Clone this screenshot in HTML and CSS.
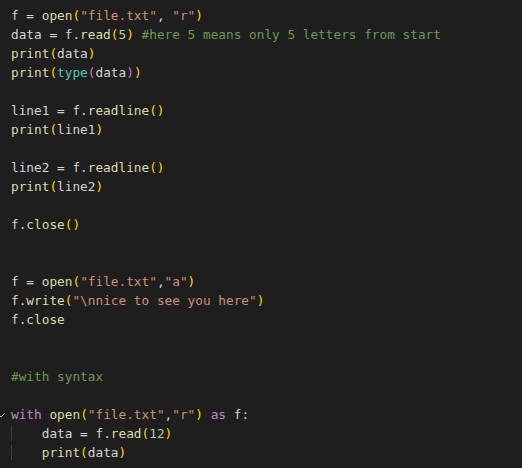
FILE: index.html
```
<!DOCTYPE html>
<html>
<head>
<meta charset="utf-8">
<link rel="stylesheet" href="styles.css">
</head>
<body>
<div class="editor">
<div class="ln"><span class="g"></span><code>f = <span class="fn">open</span><span class="b1">(</span><span class="s">"file.txt"</span>, <span class="s">"r"</span><span class="b1">)</span></code></div>
<div class="ln"><span class="g"></span><code>data = f.<span class="fn">read</span><span class="b1">(</span><span class="n">5</span><span class="b1">)</span> <span class="c">#here 5 means only 5 letters from start</span></code></div>
<div class="ln"><span class="g"></span><code><span class="fn">print</span><span class="b1">(</span>data<span class="b1">)</span></code></div>
<div class="ln"><span class="g"></span><code><span class="fn">print</span><span class="b1">(</span><span class="t">type</span><span class="b2">(</span>data<span class="b2">)</span><span class="b1">)</span></code></div>
<div class="ln"><span class="g"></span><code></code></div>
<div class="ln"><span class="g"></span><code>line1 = f.<span class="fn">readline</span><span class="b1">()</span></code></div>
<div class="ln"><span class="g"></span><code><span class="fn">print</span><span class="b1">(</span>line1<span class="b1">)</span></code></div>
<div class="ln"><span class="g"></span><code></code></div>
<div class="ln"><span class="g"></span><code>line2 = f.<span class="fn">readline</span><span class="b1">()</span></code></div>
<div class="ln"><span class="g"></span><code><span class="fn">print</span><span class="b1">(</span>line2<span class="b1">)</span></code></div>
<div class="ln"><span class="g"></span><code></code></div>
<div class="ln"><span class="g"></span><code>f.<span class="fn">close</span><span class="b1">()</span></code></div>
<div class="ln"><span class="g"></span><code></code></div>
<div class="ln"><span class="g"></span><code></code></div>
<div class="ln"><span class="g"></span><code>f = <span class="fn">open</span><span class="b1">(</span><span class="s">"file.txt"</span>,<span class="s">"a"</span><span class="b1">)</span></code></div>
<div class="ln"><span class="g"></span><code>f.<span class="fn">write</span><span class="b1">(</span><span class="s">"\nnice to see you here"</span><span class="b1">)</span></code></div>
<div class="ln"><span class="g"></span><code>f.<span class="fn">close</span></code></div>
<div class="ln"><span class="g"></span><code></code></div>
<div class="ln"><span class="g"></span><code></code></div>
<div class="ln"><span class="g"></span><code><span class="c">#with syntax</span></code></div>
<div class="ln"><span class="g"></span><code></code></div>
<div class="ln"><span class="g"><svg class="fold" width="8" height="8" viewBox="0 0 8 8"><polyline points="0.5,2.5 4,6 7.5,2.5" fill="none" stroke="#c5c5c5" stroke-width="1"/></svg></span><code><span class="k">with</span> <span class="fn">open</span><span class="b1">(</span><span class="s">"file.txt"</span>,<span class="s">"r"</span><span class="b1">)</span> <span class="k">as</span> f:</code></div>
<div class="ln"><span class="g"></span><code><span class="ind">    </span>data = f.<span class="fn">read</span><span class="b1">(</span><span class="n">12</span><span class="b1">)</span></code></div>
<div class="ln"><span class="g"></span><code><span class="ind">    </span><span class="fn">print</span><span class="b1">(</span>data<span class="b1">)</span></code></div>
</div>
</body>
</html>
```
FILE: styles.css
```
html, body {
  margin: 0;
  padding: 0;
  background: #1e1e1e;
}
.editor {
  padding-top: 6px;
  font-family: "DejaVu Sans Mono", "Liberation Mono", monospace;
  font-size: 12.75px;
  color: #d4d4d4;
}
.ln {
  display: flex;
  height: 19px;
  line-height: 19px;
  white-space: pre;
}
.g {
  width: 11px;
  flex: none;
  display: flex;
  align-items: center;
}
.fold {
  margin-left: -3px;
}
code {
  font: inherit;
}
.ind {
  box-shadow: inset 1px 0 0 #404040;
}
.fn { color: #dcdcaa; }
.t { color: #4ec9b0; }
.s { color: #ce9178; }
.c { color: #6a9955; }
.n { color: #b5cea8; }
.k { color: #c586c0; }
.b1 { color: #ffd700; }
.b2 { color: #da70d6; }
```
